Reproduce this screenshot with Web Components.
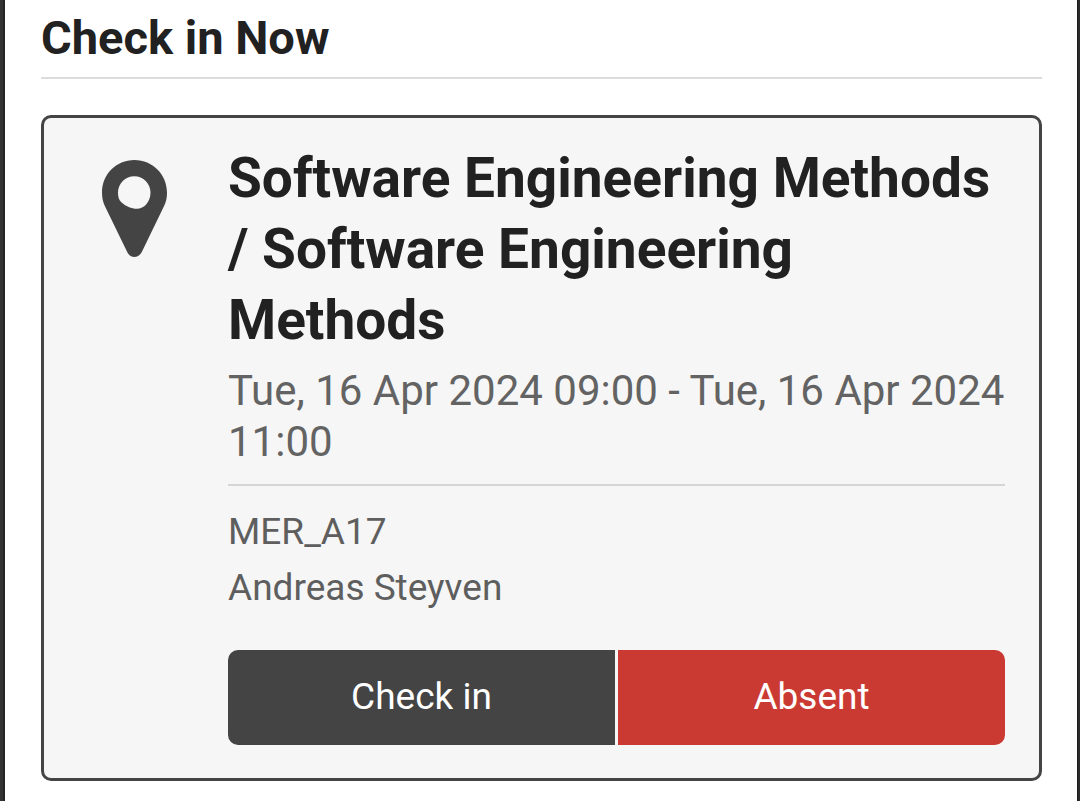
<!DOCTYPE html>
<html lang="en">
<head>
<meta charset="utf-8">
<meta name="viewport" content="width=device-width, initial-scale=1">
<title>Check in</title>
<style>
html, body { margin: 0; background: #fff; }
body { font-family: Roboto, "Liberation Sans", sans-serif; color: #212121; }
</style>
</head>
<body>
<app-frame>
  <page-section heading="Check in Now">
    <event-card>
      <map-pin slot="icon"></map-pin>
      <span slot="title">Software Engineering Methods / Software Engineering Methods</span>
      <span slot="time">Tue, 16 Apr 2024 09:00 - Tue, 16 Apr 2024 11:00</span>
      <span slot="room">MER_A17</span>
      <span slot="person">Andreas Steyven</span>
      <check-actions slot="actions"></check-actions>
    </event-card>
  </page-section>
</app-frame>
<script>
function define(name, html) {
  const template = document.createElement('template');
  template.innerHTML = html;
  customElements.define(name, class extends HTMLElement {
    constructor() {
      super();
      this.attachShadow({ mode: 'open' }).append(template.content.cloneNode(true));
    }
    connectedCallback() {
      const heading = this.shadowRoot.querySelector('[data-heading]');
      if (heading) heading.textContent = this.getAttribute('heading');
    }
  });
}

define('app-frame', `
<style>
:host { display: flex; min-height: 100vh; box-sizing: border-box; }
.left { flex: none; width: 3px; background: #333; border-right: 2px solid #262425; }
.right { flex: none; width: 2px; background: #2b2b2b; border-left: 1px solid #1b1b1b; }
main { flex: 1; min-width: 0; padding: 10px 35px 20px 36px; }
</style>
<div class="left"></div>
<main><slot></slot></main>
<div class="right"></div>`);

define('page-section', `
<style>
:host { display: block; }
h1 { margin: 0 0 36px; padding-bottom: 11px; border-bottom: 2px solid #dcdcdc;
  font-size: 47px; line-height: 56px; font-weight: 700; }
</style>
<h1 data-heading></h1>
<slot></slot>`);

define('event-card', `
<style>
:host { display: flex; gap: 38px; padding: 25px 34px 33px; background: #f6f6f6;
  border: 3px solid #444; border-radius: 10px; }
.icon { flex: none; width: 112px; padding-top: 17px; display: flex; justify-content: center; align-items: flex-start; }
.body { flex: 1; min-width: 0; }
h2 { margin: 0 0 9px; font-size: 55px; line-height: 71px; font-weight: 700; }
.time { margin: 0 0 18px; padding-bottom: 17px; border-bottom: 2px solid #d5d5d5;
  font-size: 42px; line-height: 51px; color: #636363; }
.line { margin: 0; font-size: 37px; line-height: 56px; color: #5e5e5e; }
.actions { margin-top: 34px; }
</style>
<div class="icon"><slot name="icon"></slot></div>
<div class="body">
  <h2><slot name="title"></slot></h2>
  <p class="time"><slot name="time"></slot></p>
  <p class="line"><slot name="room"></slot></p>
  <p class="line"><slot name="person"></slot></p>
  <div class="actions"><slot name="actions"></slot></div>
</div>`);

define('map-pin', `
<style>
:host { display: block; }
svg { display: block; }
</style>
<svg width="65" height="97" viewBox="0 0 65 97" aria-hidden="true">
<path fill="#444" fill-rule="evenodd" d="M32.5 0C14 0 0 14.5 0 32.5C0 38 1 42 2.7 45.7L25.2 92C26.6 95 29.2 97 32.3 97C35.5 97 38.2 95 39.8 92L62.2 45.7C64.1 42 65 38 65 32.5C65 14.5 50.5 0 32.5 0ZM32.3 16.3C41.3 16.3 48.5 23.6 48.5 32.5C48.5 42 42 48.8 35 48.8C29.5 48.8 23.5 46 19.3 42.2C16.7 39.8 16 36.5 16 32.5C16 23.6 23.4 16.3 32.3 16.3Z"/>
</svg>`);

define('check-actions', `
<style>
:host { display: flex; gap: 3px; }
button { flex: 1; height: 95px; margin: 0; padding: 0 0 2px; border: 0; color: #fff;
  font: 400 37px/42px Roboto, "Liberation Sans", sans-serif; cursor: pointer; }
.in { background: #444; border-radius: 10px 0 0 10px; }
.absent { background: #ca3a33; border-radius: 0 10px 10px 0; }
</style>
<button class="in" type="button">Check in</button>
<button class="absent" type="button">Absent</button>`);
</script>
</body>
</html>
